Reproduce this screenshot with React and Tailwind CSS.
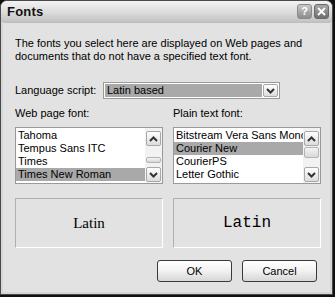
import React from "react";

const UI = { fontFamily: '"Liberation Sans", Arial, sans-serif' };

function Chevron({ up }) {
  return (
    <svg width="9" height="6" viewBox="0 0 9 6">
      <path
        d={up ? "M1 5 L4.5 1.5 L8 5" : "M1 1 L4.5 4.5 L8 1"}
        fill="none"
        stroke="#333"
        strokeWidth="2"
      />
    </svg>
  );
}

function ScrollBtn({ up }) {
  return (
    <div className="w-[15px] h-[15px] rounded-[2px] border border-[#a8a8a8] bg-gradient-to-b from-[#ffffff] to-[#dcdcdc] flex items-center justify-center">
      <Chevron up={up} />
    </div>
  );
}

function ListBox({ items, selected, thumbTop, clip }) {
  return (
    <div className="h-[57px] border border-[#9a9a9a] bg-white flex">
      <div className="flex-1 pt-[1px] overflow-hidden">
        {items.map((t, i) => (
          <div
            key={t}
            className={
              "h-[13px] leading-[13px] text-[11px] pl-[2px] whitespace-nowrap " +
              (i === selected ? "bg-[#a9a9a9]" : "")
            }
          >
            {t}
          </div>
        ))}
      </div>
      <div className="w-[17px] flex flex-col items-center pt-[3px] pb-[1px] bg-[#f2f2f2]">
        <ScrollBtn up />
        <div className="flex-1 w-full relative">
          <div
            className="absolute left-[1px] w-[15px] rounded-[2px] border border-[#b4b4b4] bg-gradient-to-b from-[#f4f4f4] to-[#d8d8d8]"
            style={{ top: thumbTop, height: clip }}
          />
        </div>
        <ScrollBtn />
      </div>
    </div>
  );
}

export default function App() {
  return (
    <div className="w-[335px] h-[297px] bg-[#111] text-black" style={UI}>
      <div className="w-[333px] h-[295px] rounded-t-[7px] border border-[#4a4a4a] bg-[#d6d6d6] flex flex-col overflow-hidden">
        <div className="h-[21px] shrink-0 flex items-center pl-[6px] pr-[3px] bg-gradient-to-b from-[#f2f2f2] via-[#dedede] to-[#c2c2c2]">
          <span className="text-[13px] font-bold tracking-[0.2px] text-[#111]">Fonts</span>
          <div className="ml-auto flex gap-[2px]">
            <div className="w-[15px] h-[15px] rounded-[3px] border border-[#8a8a8a] bg-gradient-to-b from-[#c8c8c8] to-[#8c8c8c] flex items-center justify-center text-white text-[11px] font-bold leading-none">
              ?
            </div>
            <div className="w-[15px] h-[15px] rounded-[3px] border border-[#6a6a6a] bg-gradient-to-b from-[#a8a8a8] to-[#6e6e6e] flex items-center justify-center">
              <svg width="9" height="9" viewBox="0 0 9 9">
                <path d="M1 1 L8 8 M8 1 L1 8" stroke="#fff" strokeWidth="2" />
              </svg>
            </div>
          </div>
        </div>
        <div className="flex-1 mx-[2px] mb-[2px] border-t border-[#bdbdbd] bg-[#e2e2e2] px-[12px] pt-[14px] flex flex-col">
          <p className="text-[11px] leading-[13px] w-[300px]">
            The fonts you select here are displayed on Web pages and documents that do not have a specified text font.
          </p>
          <div className="flex items-center mt-[19px] h-[17px]">
            <span className="text-[11px] w-[88px]">Language script:</span>
            <div className="w-[177px] h-[17px] border border-[#9a9a9a] bg-white flex p-[1px]">
              <div className="flex-1 bg-[#a9a9a9] text-[11px] leading-[13px] pl-[2px]">Latin based</div>
              <div className="w-[15px] rounded-[2px] border border-[#a8a8a8] bg-gradient-to-b from-[#ffffff] to-[#dcdcdc] flex items-center justify-center ml-[1px]">
                <Chevron />
              </div>
            </div>
          </div>
          <div className="grid grid-cols-[148px_148px] gap-x-[10px] mt-[8px]">
            <div className="text-[11px] leading-[13px]">Web page font:</div>
            <div className="text-[11px] leading-[13px]">Plain text font:</div>
            <div className="mt-[7px]">
              <ListBox
                items={["Tahoma", "Tempus Sans ITC", "Times", "Times New Roman"]}
                selected={3}
                thumbTop={11}
                clip={6}
              />
            </div>
            <div className="mt-[7px]">
              <ListBox
                items={["Bitstream Vera Sans Mono", "Courier New", "CourierPS", "Letter Gothic"]}
                selected={1}
                thumbTop={1}
                clip={11}
              />
            </div>
            <div className="mt-[14px] h-[50px] border border-[#b0b0b0] border-b-white border-r-white flex items-center justify-center">
              <span className="text-[15px]" style={{ fontFamily: '"Liberation Serif", serif' }}>Latin</span>
            </div>
            <div className="mt-[14px] h-[50px] border border-[#b0b0b0] border-b-white border-r-white flex items-center justify-center">
              <span className="text-[16px]" style={{ fontFamily: '"Liberation Mono", monospace' }}>Latin</span>
            </div>
          </div>
          <div className="flex justify-end gap-[10px] mt-[12px] pr-[1px]">
            <button className="w-[75px] h-[22px] rounded-[3px] border border-[#3a3a3a] bg-gradient-to-b from-[#ffffff] via-[#f2f2f2] to-[#d6d6d6] text-[11px]">
              OK
            </button>
            <button className="w-[75px] h-[22px] rounded-[3px] border border-[#3a3a3a] bg-gradient-to-b from-[#ffffff] via-[#f2f2f2] to-[#d6d6d6] text-[11px]">
              Cancel
            </button>
          </div>
        </div>
      </div>
    </div>
  );
}
